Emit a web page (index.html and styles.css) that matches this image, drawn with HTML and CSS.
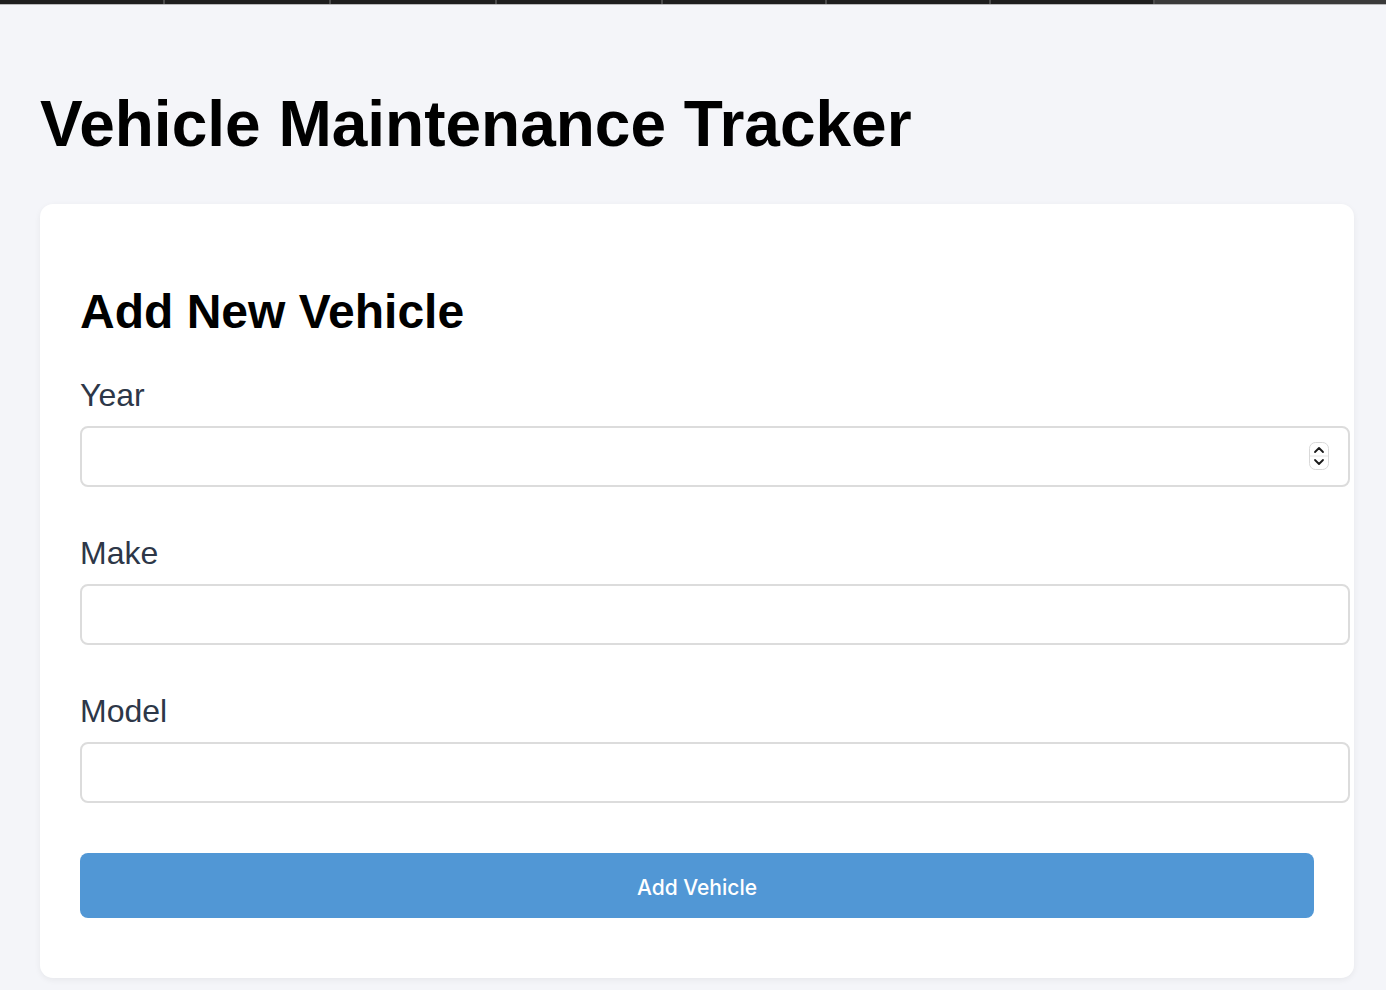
FILE: index.html
```html
<!DOCTYPE html>
<html lang="en">
<head>
<meta charset="utf-8">
<title>Vehicle Maintenance Tracker</title>
<link rel="stylesheet" href="styles.css">
</head>
<body>
<div class="tabstrip">
  <div class="tab tab-wide"></div><div class="tab tab-wide"></div><div class="tab tab-wide"></div><div class="tab tab-wide"></div>
  <div class="tab"></div><div class="tab"></div><div class="tab"></div><div class="tab tab-active"></div>
</div>
<main class="container">
  <h1 class="page-title">Vehicle Maintenance Tracker</h1>
  <section class="card">
    <h2 class="card-title">Add New Vehicle</h2>
    <form class="vehicle-form">
      <div class="field">
        <label class="field-label" for="year">Year</label>
        <div class="input-wrap">
          <input class="field-input" id="year" type="text">
          <span class="stepper">
            <svg width="20" height="28" viewBox="0 0 20 28">
              <rect x="0.5" y="0.5" width="19" height="27" rx="6" fill="#fff" stroke="#d9d9d9"/>
              <line x1="1" y1="14" x2="19" y2="14" stroke="#e4e4e4"/>
              <path d="M6 10 L10 6 L14 10" fill="none" stroke="#1a1a1a" stroke-width="1.8" stroke-linecap="round" stroke-linejoin="round"/>
              <path d="M6 18 L10 22 L14 18" fill="none" stroke="#1a1a1a" stroke-width="1.8" stroke-linecap="round" stroke-linejoin="round"/>
            </svg>
          </span>
        </div>
      </div>
      <div class="field">
        <label class="field-label" for="make">Make</label>
        <input class="field-input" id="make" type="text">
      </div>
      <div class="field">
        <label class="field-label" for="model">Model</label>
        <input class="field-input" id="model" type="text">
      </div>
      <button class="submit-btn" type="button">Add Vehicle</button>
    </form>
  </section>
</main>
</body>
</html>
```

FILE: styles.css
```css
* { box-sizing: border-box; }
html, body { margin: 0; padding: 0; }
body {
  background: #f4f5f9;
  font-family: "Liberation Sans", Arial, sans-serif;
  color: #000;
  width: 1386px;
  height: 990px;
  overflow: hidden;
}
.tabstrip {
  display: flex;
  height: 5px;
  background: #1e1e1e;
  border-bottom: 1px solid #b9b9bb;
}
.tab {
  width: 164px;
  flex: none;
  border-right: 2px solid #4a4a4a;
  background: #1e1e1e;
}
.tab-wide { width: 166px; }
.tab:first-child { width: 165px; }
.tab-active {
  flex: 1;
  border-right: none;
  background: #3a3a3a;
}
.container {
  padding: 82px 32px 0 40px;
}
.page-title {
  margin: 0 0 43px 0;
  font-size: 64px;
  font-weight: 700;
  line-height: 74px;
  letter-spacing: 0;
}
.card {
  width: 1314px;
  background: #fff;
  border-radius: 13px;
  box-shadow: 0 2px 6px rgba(0, 0, 0, 0.06);
  padding: 40px 40px 60px 40px;
}
.card-title {
  margin: 40px 0 38px 0;
  font-size: 48px;
  font-weight: 700;
  line-height: 55px;
}
.vehicle-form {
  display: flex;
  flex-direction: column;
}
.field {
  display: flex;
  flex-direction: column;
  margin-bottom: 48px;
}
.field:nth-child(3) { margin-bottom: 50px; }
.field-label {
  font-size: 32px;
  line-height: 37px;
  color: #2d3748;
  margin-bottom: 12px;
}
.input-wrap {
  position: relative;
  width: 1270px;
}
.field-input {
  width: 1270px;
  height: 61px;
  border: 2px solid #dcdcdc;
  border-radius: 8px;
  padding: 0 16px;
  font-size: 22px;
  background: #fff;
  outline: none;
}
.stepper {
  position: absolute;
  left: 1229px;
  top: 16px;
  width: 20px;
  height: 28px;
  display: block;
}
.stepper svg { display: block; }
.submit-btn {
  width: 1234px;
  height: 65px;
  border: none;
  border-radius: 8px;
  background: #5197d5;
  color: #fff;
  font-family: "Inter", "Liberation Sans", sans-serif;
  font-size: 21px;
  font-weight: 500;
  cursor: pointer;
  padding: 3px 0 0 0;
}
```
